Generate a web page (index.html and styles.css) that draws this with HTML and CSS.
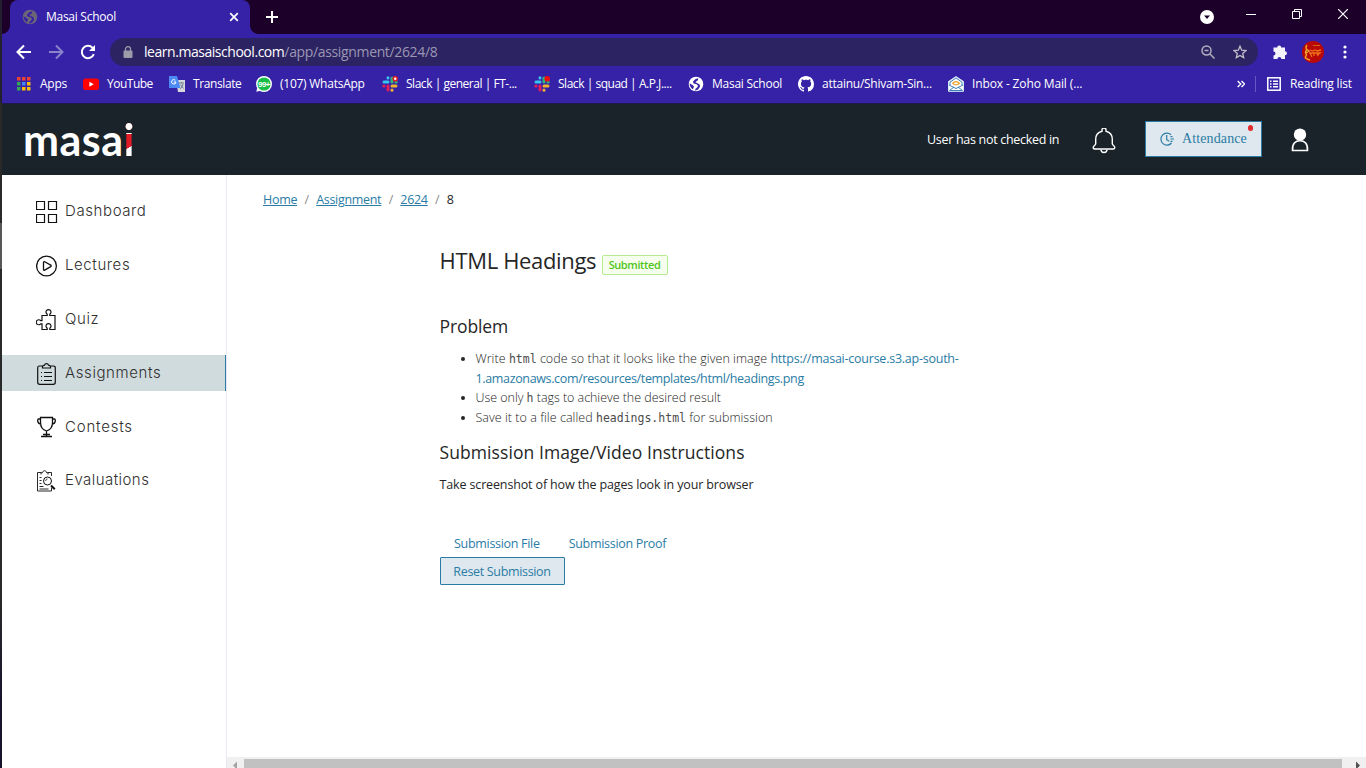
FILE: index.html
```html
<!DOCTYPE html>
<html lang="en">
<head>
<meta charset="utf-8">
<title>Masai School</title>
<link rel="stylesheet" href="styles.css">
</head>
<body>
<svg width="0" height="0" class="defs">
  <symbol id="globe" viewBox="0 0 16 16"><circle cx="8" cy="8" r="7.3" fill="currentColor"/><path class="land" d="M10.4 2.2 7.6 3 5 5.600l.5 1.800 2.700.5 1.800 1.500-.4 1.600-2.200 1.900-.3 1.800 3-1.200 2-3-.5-2-2.800-1.400L7.300 6l2.400-1.400zM1.600 7.200l3.200 2 1.200 1.400-1 2.600C2.900 12 1.500 9.500 1.600 7.200z"/></symbol>
  <symbol id="slack" viewBox="0 0 16 16"><g stroke-width="3" stroke-linecap="round"><path stroke="#36c5f0" d="M2 6h4M6 1.700v.2"/><path stroke="#2eb67d" d="M10 2v4M14 6h.2"/><path stroke="#ecb22e" d="M10 10h4M10 14v.2"/><path stroke="#e01e5a" d="M6 10v4M2 10h-.2"/></g></symbol>
</svg>
<div class="screen">
  <div class="desktop-edge"></div>
  <div class="browser">
    <div class="tabstrip">
      <div class="tab">
        <svg class="i16 dim-globe"><use href="#globe"/></svg>
        <span class="tab-title">Masai School</span>
        <svg class="tab-close" width="10" height="10" viewBox="0 0 10 10"><path d="M1.200 1.200l7.600 7.600M8.800 1.200L1.200 8.800" stroke="#fff" stroke-width="1.700"/></svg>
      </div>
      <svg class="new-tab" width="12" height="12" viewBox="0 0 12 12"><path d="M6 0v12M0 6h12" stroke="#fff" stroke-width="2"/></svg>
      <div class="window-buttons">
        <svg width="14" height="14" viewBox="0 0 14 14"><circle cx="7" cy="7" r="7" fill="#fff"/><path d="M4 5.500h6L7 9z" fill="#1d0029"/></svg>
        <svg width="10" height="10" viewBox="0 0 10 10"><path d="M0 5.500h10" stroke="#fff"/></svg>
        <svg width="10" height="10" viewBox="0 0 10 10"><path d="M.5 2.500h7v7h-7zM2.500 2.500v-2h7v7h-2" stroke="#fff" fill="none"/></svg>
        <svg width="10" height="10" viewBox="0 0 10 10"><path d="M0 0l10 10M10 0L0 10" stroke="#fff" stroke-width="1.200"/></svg>
      </div>
    </div>
    <div class="toolbar">
      <svg class="nav" width="16" height="16" viewBox="0 0 16 16"><path d="M15 8H2M8 1.500L1.500 8 8 14.500" stroke="#fff" stroke-width="2" fill="none"/></svg>
      <svg class="nav" width="16" height="16" viewBox="0 0 16 16"><path d="M1 8h13M8 1.500L14.500 8 8 14.500" stroke="#8b83c9" stroke-width="2" fill="none"/></svg>
      <svg class="nav" width="16" height="16" viewBox="0 0 16 16"><path d="M13.800 10.200A6.200 6.200 0 1 1 12.600 3.800L14 5.200" stroke="#fff" stroke-width="2" fill="none"/><path d="M15 1v6H9z" fill="#fff"/></svg>
      <div class="address">
        <svg width="10" height="12" viewBox="0 0 10 12"><path d="M2.500 5V3.200a2.500 2.500 0 0 1 5 0V5" stroke="#9d9aa9" stroke-width="1.300" fill="none"/><rect x=".5" y="4.500" width="9" height="7.500" rx="1" fill="#9d9aa9"/></svg>
        <div class="url">learn.masaischool.com<span>/app/assignment/2624/8</span></div>
        <svg class="zoom-ico" width="14" height="14" viewBox="0 0 14 14"><g fill="none" stroke="#b2adbd" stroke-width="1.500"><circle cx="5.500" cy="5.500" r="4.500"/><path d="M9 9l4.500 4.500M3.500 5.500h4"/></g></svg>
        <svg width="14" height="14" viewBox="0 0 14 14"><path d="M7 1.200l1.700 4 4.300.4-3.300 2.800 1 4.200L7 10.400l-3.700 2.200 1-4.200L1 5.600l4.300-.4z" fill="none" stroke="#c2bec9" stroke-width="1.300"/></svg>
      </div>
      <svg class="puzzle" width="16" height="16" viewBox="0 0 16 16"><path fill="#f5f3fb" d="M1.500 3.500h3.700a2 2 0 1 1 4 0H13v3.700a2 2 0 1 1 0 4V15H9.400a2 2 0 0 0-4 0H1.500v-3.600a2 2 0 0 0 0-4z"/></svg>
      <svg class="avatar" width="22" height="22" viewBox="0 0 22 22"><circle cx="11" cy="11" r="11" fill="#b90808"/><path d="M5 4c-3 3 1 3-1 6s2 3 0 5 1 3 4 4M4 8l3 2-3 2" stroke="#eda52c" stroke-width="1.500" fill="none"/><path d="M11 4.500h7" stroke="#d87820" stroke-width=".8"/><path d="M8 9l3 1 2-1 2 1 4-1M7 12h11l-2 1.500M8 12l2 4M12 12v3M15 12l1 3" stroke="#ef701c" stroke-width="1.300" fill="none"/></svg>
      <svg width="4" height="14" viewBox="0 0 4 14"><g fill="#fff"><circle cx="2" cy="2" r="1.600"/><circle cx="2" cy="7" r="1.600"/><circle cx="2" cy="12" r="1.600"/></g></svg>
    </div>
    <div class="bookmarks">
      <div class="bm apps"><svg class="i16" viewBox="0 0 16 16"><path fill="#ea4335" d="M0 1h3.500v3.500H0zM5 1h3.500v3.500H5zM10 1h3.500v3.500H10z"/><path fill="#34a853" d="M0 6h3.500v3.500H0zM0 11h3.500v3.500H0z"/><path fill="#4285f4" d="M5 6h3.500v3.500H5z"/><path fill="#fbbc05" d="M10 6h3.500v3.500H10zM5 11h3.500v3.500H5zM10 11h3.500v3.500H10z"/></svg><span>Apps</span></div>
      <div class="bm yt"><svg class="i16" viewBox="0 0 16 16"><rect y="2.500" width="16" height="11.500" rx="2.800" fill="red"/><path d="M6.400 5.700v5L10.700 8.200z" fill="#fff"/></svg><span>YouTube</span></div>
      <div class="bm tr"><svg class="i16" viewBox="0 0 16 16"><path fill="#d5d7dc" d="M7 4h9v12H9z"/><path fill="#4c8bf5" d="M0 0h8l3.500 12H0z"/><path d="M6.300 4.200A2.200 2.200 0 1 0 7 6H4.800" stroke="#fff" fill="none"/><path d="M10 7h5M12.500 6v1M14 8c-.5 3-2 4-3 5M11.500 8.500l3 4" stroke="#6a7d8c" fill="none"/></svg><span>Translate</span></div>
      <div class="bm wa"><svg class="i16" viewBox="0 0 16 16"><circle cx="8" cy="8" r="7.300" fill="#16bd46" stroke="#fff" stroke-width="1.400"/><path d="M.3 15.700l1-4.200 3.200 3.200z" fill="#fff"/><text x="8" y="11" text-anchor="middle" class="badge-count">99+</text></svg><span>(107) WhatsApp</span></div>
      <div class="bm s1"><svg class="i16" viewBox="0 0 16 16"><use href="#slack" width="16" height="16"/><circle cx="13.200" cy="2.800" r="2.800" fill="#e01b24"/><circle cx="13.200" cy="2.800" r="1.200" fill="#fff"/></svg><span>Slack | general | FT-...</span></div>
      <div class="bm s2"><svg class="i16" viewBox="0 0 16 16"><use href="#slack" width="16" height="16"/><circle cx="13.200" cy="2.800" r="2.800" fill="#f10e0e"/></svg><span>Slack | squad | A.P.J....</span></div>
      <div class="bm ms"><svg class="i16 lit-globe"><use href="#globe"/></svg><span>Masai School</span></div>
      <div class="bm gh"><svg class="i16" viewBox="0 0 16 16"><path fill="#fff" d="M8 0C3.580 0 0 3.580 0 8c0 3.540 2.290 6.530 5.470 7.590.4.070.55-.17.55-.38 0-.19-.01-.82-.01-1.490-2.010.37-2.530-.49-2.690-.94-.09-.23-.48-.94-.82-1.130-.28-.15-.68-.52-.01-.53.63-.01 1.080.58 1.230.82.72 1.210 1.870.87 2.330.66.07-.52.28-.87.51-1.070-1.780-.2-3.640-.89-3.640-3.950 0-.87.31-1.590.82-2.150-.08-.2-.36-1.020.08-2.120 0 0 .67-.21 2.200.82.64-.18 1.320-.27 2-.27s1.360.09 2 .27c1.530-1.040 2.200-.82 2.200-.82.44 1.100.16 1.920.08 2.120.51.56.82 1.270.82 2.150 0 3.070-1.870 3.750-3.650 3.950.29.25.54.73.54 1.480 0 1.070-.01 1.930-.01 2.200 0 .21.15.46.55.38A8 8 0 0 0 16 8c0-4.420-3.580-8-8-8z"/></svg><span>attainu/Shivam-Sin...</span></div>
      <div class="bm zo"><svg class="i16" viewBox="0 0 16 16"><path fill="#fff" stroke="#d5e8f6" d="M.5 5.500L8 .6l7.500 4.900v9.800H.5z"/><path fill="none" stroke="#3b80b8" d="M2 6.200L8 2l6 4.200v3M2 6.200v3"/><path d="M4.500 7.500c2-2.500 5-2.500 7 0-2 1.500-5 1.500-7 0" fill="none" stroke="#eea22c" stroke-width="1.300"/><path d="M1 9l7 3.500L15 9M1.500 14.500L6 11M14.500 14.500L10 11M1.500 14.500h13" stroke="#3b80b8" fill="none"/></svg><span>Inbox - Zoho Mail (...</span></div>
      <div class="bm-end">
        <svg width="8" height="8" viewBox="0 0 8 8"><path d="M.7 1l3 3-3 3M4.500 1l3 3-3 3" stroke="#fff" stroke-width="1.400" fill="none"/></svg>
        <i class="sep"></i>
        <svg width="14" height="14" viewBox="0 0 14 14"><rect x=".8" y=".8" width="12.400" height="12.400" fill="none" stroke="#fff" stroke-width="1.500"/><path d="M3 4.200h1.500M6 4.200h5M3 7h1.500M6 7h5M3 9.800h1.500M6 9.800h5" stroke="#fff" stroke-width="1.400"/></svg>
        <span>Reading list</span>
      </div>
    </div>
    <header class="site-header">
      <div class="logo">masa<span>i</span></div>
      <div class="checkin">User has not checked in</div>
      <svg class="bell" width="24" height="26" viewBox="0 0 24 26"><g fill="none" stroke="#fff" stroke-width="1.400"><path d="M10 3.200V2a1.500 1.500 0 0 1 4 0v1.200c4 1 6.300 4 6.300 8v4.500c0 1.500 2.500 2 2.500 3.800 0 1-.8 1.500-1.800 1.500H3c-1 0-1.800-.5-1.800-1.500 0-1.800 2.500-2.300 2.500-3.800v-4.500c0-4 2.300-7 6.300-8z"/><path d="M9 21.500c0 2 1 3 3 3s3-1 3-3"/></g></svg>
      <div class="attendance">
        <svg width="14" height="14" viewBox="0 0 14 14"><g fill="none" stroke="#2a7ca5" stroke-width="1.200"><path d="M11 2.700A6 6 0 1 0 11.500 11M6.700 3v4.700l2.500 1.500M10.500 4.700h2M10.500 7h3.500M10.500 9.300h2"/></g></svg>
        <span>Attendance</span><i class="dot"></i>
      </div>
      <svg class="user" width="18" height="24" viewBox="0 0 18 24"><circle cx="9" cy="6.700" r="6.200" fill="#fff"/><path d="M1.500 22.500C1 15.500 4.500 12.800 9 12.800s8 2.700 7.500 9.700z" fill="#192329" stroke="#fff" stroke-width="1.600"/></svg>
    </header>
    <div class="page">
      <nav class="sidebar">
        <a class="item"><svg width="22" height="24" viewBox="0 0 22 24"><path d="M.5 1.500h8v8h-8zM12.500 1.500h8v8h-8zM.5 14.500h8v8h-8zM12.500 14.500h8v8h-8z" stroke-width="1.200"/></svg><span>Dashboard</span></a>
        <a class="item"><svg width="22" height="24" viewBox="0 0 22 24"><circle cx="10.500" cy="12" r="9.900" stroke-width="1.300"/><path d="M7.500 8.500c0-.8.600-1.100 1.200-.8l6 3.400c.7.400.7 1.100 0 1.500l-6 3.500c-.6.300-1.200 0-1.200-.7z" stroke-width="1.300"/></svg><span>Lectures</span></a>
        <a class="item"><svg width="22" height="24" viewBox="0 0 22 24"><path d="M6 7.500h5.200V6.200a2.500 2.500 0 1 1 2.600 0v1.300H19v14h-5.200v-1.300a2.500 2.500 0 1 0-2.600 0v1.300H6v-5.700H4.700a2.500 2.500 0 1 1 0-3.100H6z" stroke-width="1.200"/></svg><span>Quiz</span></a>
        <a class="item active"><svg width="22" height="24" viewBox="0 0 22 24"><path d="M7 4H3.500A1.800 1.800 0 0 0 1.700 5.800v14.500a2 2 0 0 0 2 2h13.600a2 2 0 0 0 2-2V5.800A1.800 1.800 0 0 0 17.500 4H14M6.500 6V4.500c0-1 1.200-1 2-1.300C9 1 12 1 12.500 3.200c.8.300 2 .3 2 1.300V6zM5 10.500h1M8 10.500h8M5 14.500h1M8 14.500h8M5 18.500h1M8 18.500h8" stroke-width="1.200"/></svg><span>Assignments</span></a>
        <a class="item"><svg width="22" height="24" viewBox="0 0 22 24"><path d="M4.500 1.500h12v5c0 5-2.500 7.500-6 8.500-3.500-1-6-3.500-6-8.500zM4.500 3H2.700C1 3 1.200 8 5 8M16.500 3h1.800c1.700 0 1.500 5-2.300 5M10.500 15v5M7 18.500h7M5 20.500h11" stroke-width="1.300"/></svg><span class="mid">Contests</span></a>
        <a class="item"><svg width="22" height="24" viewBox="0 0 22 24"><path d="M5 3.500H1.500v18.500h14v-3.500M12 3.500h3.500V7M5 5.500V3.700h1.500c.5-2.700 3.500-2.700 4 0H12v1.800M3.500 8.500h2M3.500 11.500h2M3.500 14.500h2M3.500 17.500h4M3.500 20h9" stroke-width=".9"/><path d="M15 16.500l3.800 3.800" stroke-width="2"/><circle cx="11.500" cy="12" r="4" stroke-width="1"/><path d="M9.700 12c0-1.500.8-2 1.800-2" stroke-width=".8"/></svg><span class="tight">Evaluations</span></a>
      </nav>
      <main class="main">
        <div class="crumbs"><a>Home</a><i>/</i><a>Assignment</a><i>/</i><a>2624</a><i>/</i><b>8</b></div>
        <article class="content">
          <div class="title-row"><h1>HTML Headings</h1><span class="tag">Submitted</span></div>
          <h2 class="h-problem">Problem</h2>
          <ul>
            <li>Write <code>html</code> code so that it looks like the given image <a class="l1">https://masai-course.s3.ap-south-</a><br><a>1.amazonaws.com/resources/templates/html/headings.png</a></li>
            <li class="snug">Use only <code>h</code> tags to achieve the desired result</li>
            <li>Save it to a file called <code>headings.html</code> for submission</li>
          </ul>
          <h2 class="h-sub">Submission Image/Video Instructions</h2>
          <p>Take screenshot of how the pages look in your browser</p>
          <div class="links"><a>Submission File</a><a>Submission Proof</a></div>
          <button class="reset">Reset Submission</button>
        </article>
        <div class="hscroll"><svg width="17" height="11" viewBox="0 0 17 11"><path d="M10 4.500v8L6 8.500z" fill="#a3a3a3"/></svg><div class="thumb"></div><svg width="24" height="11" viewBox="0 0 24 11"><path d="M14 4.500v8l4-4z" fill="#505050"/></svg></div>
      </main>
    </div>
  </div>
</div>
</body>
</html>
```
FILE: styles.css
```css
* { box-sizing: border-box; }
body { margin: 0; width: 1366px; height: 768px; overflow: hidden; font-family: "Open Sans", "Noto Sans", sans-serif; font-size: 12px; color: #262626; }
svg { display: block; flex: none; }
.defs { position: absolute; }
.screen { display: flex; width: 1366px; height: 768px; }
.desktop-edge { width: 2px; background: linear-gradient(#25202f 0 103px, #292929 103px 223px, #575757 223px 269px, #292929 269px 600px, #17142e 700px); }
.browser { flex: 1; display: flex; flex-direction: column; min-width: 0; background: #fff; }
.i16 { width: 16px; height: 16px; }

/* Browser chrome */
.tabstrip { height: 34px; background: #1d0029; display: flex; padding-left: 8px; color: #fff; }
.tab { width: 240px; background: #3622a7; border-radius: 8px 8px 0 0; display: flex; align-items: center; padding: 0 11px 1px 12px; position: relative; }
.tab::before, .tab::after { content: ""; position: absolute; bottom: 0; width: 8px; height: 8px; }
.tab::before { left: -8px; background: radial-gradient(circle at 0 0, transparent 7.500px, #3622a7 8px); }
.tab::after { right: -8px; background: radial-gradient(circle at 100% 0, transparent 7.500px, #3622a7 8px); }
.dim-globe { color: #6c6577; fill: #3622a7; }
.lit-globe { color: #fff; fill: #3622a7; }
.tab-title { margin-left: 8px; flex: 1; letter-spacing: -.27px; }
.new-tab { margin: 11px 0 0 16px; }
.window-buttons { margin-left: auto; display: flex; padding-right: 18px; }
.window-buttons svg { margin: 9px 0 0 36px; }
.window-buttons svg:first-child { margin: 10px -4px 0 0; }

.toolbar { height: 35px; background: #3622a7; display: flex; align-items: center; padding: 1px 20px 0 14px; }
.nav { margin-right: 16px; }
.address { height: 28px; width: 1148px; flex: none; margin: 0 14px 0 -2px; border-radius: 14px; background: #2c2363; display: flex; align-items: center; padding: 0 11px 0 13px; }
.url { margin: -2px 0 0 11px; flex: 1; color: #fff; font-size: 14px; letter-spacing: -.46px; }
.url span { color: #9b97b2; letter-spacing: -.35px; }
.zoom-ico { margin-right: 18px; }
.avatar { margin: 0 19px 0 14px; }

.bookmarks { height: 35px; background: #3622a7; border-bottom: 1px solid #1b1a48; display: flex; align-items: center; padding: 0 14px 5px 15px; color: #fff; white-space: nowrap; }
.bm { display: flex; align-items: center; gap: 8px; flex: none; letter-spacing: -.25px; }
.apps { width: 66px; }
.apps svg { margin-right: -1px; }
.yt { width: 86px; letter-spacing: -.5px; }
.tr { width: 87px; letter-spacing: -.4px; }
.wa { width: 126px; }
.s1 { width: 152px; letter-spacing: -.47px; }
.s2 { width: 154px; letter-spacing: -.47px; }
.ms { width: 110px; }
.gh { width: 150px; }
.zo { width: 150px; letter-spacing: -.13px; }
.badge-count { font: bold 8px "Liberation Sans", sans-serif; fill: #fff; letter-spacing: -.5px; }
.bm-end { margin-left: auto; display: flex; align-items: center; letter-spacing: -.2px; }
.sep { width: 1px; height: 16px; background: #6656c6; margin: 0 11px 0 10px; }
.bm-end span { margin-left: 9px; width: 62px; }

/* Site header */
.site-header { height: 71px; background: #192329; color: #fff; display: flex; align-items: center; padding: 0 57px 1px 21px; }
.logo { font: 700 43px/72px Lato, sans-serif; width: 120px; height: 70px; letter-spacing: .5px; white-space: nowrap; }
.logo span { background: linear-gradient(#fff, #fff) 0 0 / 100% 20px no-repeat, linear-gradient(150deg, #e01b26 0 63%, #fff 64%); -webkit-background-clip: text; background-clip: text; color: transparent; }
.checkin { margin-left: auto; width: 132px; white-space: nowrap; font-size: 12.500px; letter-spacing: -.3px; }
.bell { margin: 3px 0 0 33px; }
.attendance { margin: -1px 0 0 29px; width: 117px; height: 36px; background: #dfe8ee; border: 1px solid #2a7ca5; display: flex; align-items: center; padding: 0 13px 0 14px; gap: 8px; color: #2a7ca5; font: 14px "Liberation Serif", serif; letter-spacing: .12px; position: relative; }
.attendance span { padding-top: 1px; }
.dot { position: absolute; right: 8px; top: 3px; width: 5px; height: 6px; border-radius: 3px; background: #e12d2d; }
.user { margin: 1px 0 0 29px; }

/* Navigation */
.page { flex: 1; display: flex; min-height: 0; }
.sidebar { width: 225px; border-right: 1px solid #e9e9f5; padding-top: 18px; }
.item { display: flex; height: 36px; margin-bottom: 18px; align-items: center; padding-left: 34px; font: 300 15px Inter, sans-serif; color: #303030; }
.item:nth-child(5) { margin-bottom: 17px; }
.item svg { fill: none; stroke: #111; margin-top: 1px; }
.item span { margin: -1px 0 0 7px; letter-spacing: .6px; }
.item .mid { letter-spacing: .8px; }
.item .tight { letter-spacing: .45px; }
.active { background: #d0dbdd; border-right: 1px solid #2a7ca5; }

/* Assignment */
.main { flex: 1; display: flex; flex-direction: column; min-width: 0; }
.crumbs { display: flex; padding: 15px 0 0 36px; height: 34px; line-height: 20px; font-size: 12.500px; letter-spacing: -.3px; }
.crumbs a { color: #2a7ca5; text-decoration: underline; }
.crumbs i { font-style: normal; color: #8c8c8c; width: 19px; text-align: center; }
.crumbs b { font-weight: 400; }
.content { flex: 1; padding: 34px 0 0 212.500px; }
.title-row { display: flex; align-items: flex-start; height: 73px; }
h1 { margin: 0; font: 400 22px/34px "Open Sans", sans-serif; letter-spacing: -.33px; width: 162px; white-space: nowrap; }
.tag { width: 66px; height: 20px; margin-top: 12px; border: 1px solid #b7eb8f; border-radius: 2px; background: #f6ffed; color: #52c41a; font-weight: 600; font-size: 11px; line-height: 18px; text-align: center; letter-spacing: -.4px; }
h2 { margin: 0; font: 400 17.500px/24px "Open Sans", sans-serif; white-space: nowrap; letter-spacing: .08px; }
.h-problem { height: 33px; line-height: 20px; letter-spacing: -.1px; }
ul { margin: 0; padding: 0 0 0 36px; font-size: 12.500px; line-height: 19.600px; font-weight: 300; letter-spacing: .04px; white-space: nowrap; }
.snug { letter-spacing: -.04px; }
code { font: 400 11.500px/14px "DejaVu Sans Mono", monospace; letter-spacing: 0; color: #4c4c4c; }
ul a { color: #2a7ca5; font-weight: 400; letter-spacing: -.35px; }
ul .l1 { letter-spacing: -.24px; }
.h-sub { margin-top: 13px; }
p { margin: 11px 0 0; line-height: 20px; font-size: 12.500px; letter-spacing: -.14px; }
.links { display: flex; gap: 29px; padding-left: 14.500px; margin-top: 39px; height: 23px; line-height: 20px; color: #2a7ca5; font-size: 12.500px; letter-spacing: -.3px; }
.reset { display: block; width: 125px; height: 28px; padding: 0; background: #dfe8ee; border: 1px solid #2a7ca5; border-radius: 1px; color: #2a7ca5; font: 12.500px "Open Sans", sans-serif; letter-spacing: -.33px; }
.hscroll { height: 11px; background: #f0f0f0; display: flex; }
.thumb { flex: 1; margin-top: 2px; background: #c1c1c1; }
```
